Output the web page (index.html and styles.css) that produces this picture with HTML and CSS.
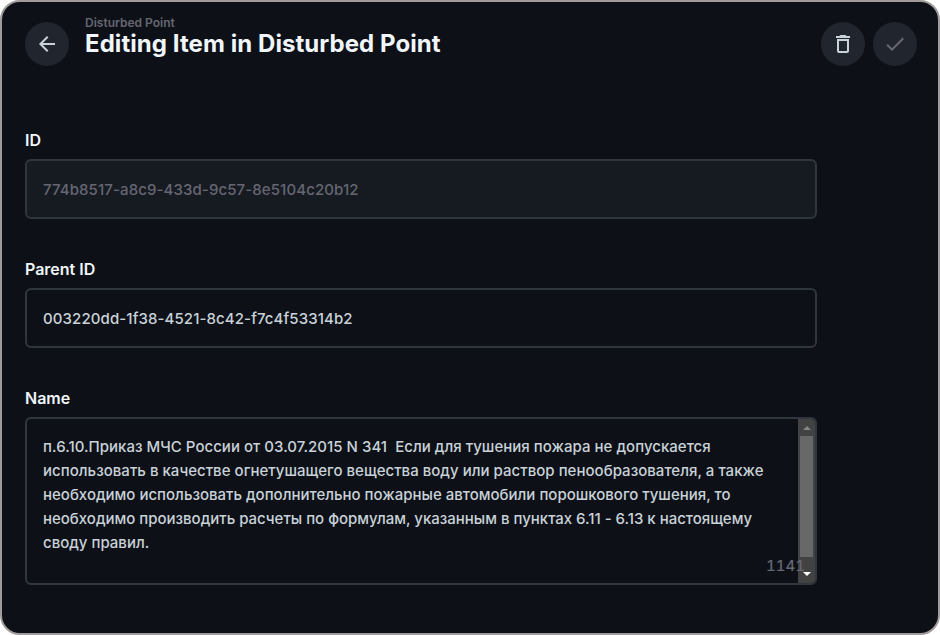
FILE: index.html
```html
<!DOCTYPE html>
<html lang="en">
<head>
<meta charset="utf-8">
<title>Editing Item in Disturbed Point</title>
<link rel="stylesheet" href="styles.css">
</head>
<body>
<main class="window">
  <header class="header">
    <button class="round" aria-label="Back"><svg viewBox="0 0 24 24"><path d="M20 11H7.83l5.59-5.59L12 4l-8 8 8 8 1.41-1.41L7.83 13H20v-2z"/></svg></button>
    <div class="titles">
      <div class="crumb">Disturbed Point</div>
      <h1>Editing Item in Disturbed Point</h1>
    </div>
    <button class="round" aria-label="Delete"><svg viewBox="0 0 24 24"><path d="M16 9v10H8V9h8m-1.500-6h-5l-1 1H5v2h14V4h-3.500l-1-1zM18 7H6v12c0 1.100.9 2 2 2h8c1.100 0 2-.9 2-2V7z"/></svg></button>
    <button class="round disabled" aria-label="Save"><svg viewBox="0 0 24 24"><path d="M9 16.170L4.830 12l-1.420 1.410L9 19 21 7l-1.410-1.410L9 16.170z"/></svg></button>
  </header>
  <form class="form">
    <section class="field">
      <label>ID</label>
      <div class="input readonly">774b8517-a8c9-433d-9c57-8e5104c20b12</div>
    </section>
    <section class="field">
      <label>Parent ID</label>
      <div class="input">003220dd-1f38-4521-8c42-f7c4f53314b2</div>
    </section>
    <section class="field">
      <label>Name</label>
      <div class="area">
        <p class="text"><span class="wide">п.6.10.Приказ МЧС России от 03.07.2015 N 341&nbsp; Если для тушения пожара не допускается</span><br><span class="wide">использовать в качестве огнетушащего вещества воду или раствор пенообразователя, а также</span><br>необходимо использовать дополнительно пожарные автомобили порошкового тушения, то<br><span class="tight">необходимо производить расчеты по формулам, указанным в пунктах 6.11 - 6.13 к настоящему</span><br>своду правил.</p>
        <div class="scrollbar">
          <svg class="arrow up" viewBox="0 0 8 4"><path d="M0 4L4 0l4 4z"/></svg>
          <div class="thumb"></div>
          <svg class="arrow down" viewBox="0 0 8 4"><path d="M0 0l4 4 4-4z"/></svg>
        </div>
        <span class="count">1141</span>
      </div>
    </section>
  </form>
</main>
</body>
</html>
```
FILE: styles.css
```css
* { box-sizing: border-box; }
body { margin: 0; background: #fff; font-family: Inter, sans-serif; color: #f0f6fc; }
.window { height: 635px; border: 2px solid #a19b9b; border-radius: 20px; background: #0d1117; padding: 13px 21px 0 23px; overflow: hidden; }
.header { display: flex; align-items: flex-start; height: 116px; }
.round { display: flex; align-items: center; justify-content: center; width: 44px; height: 44px; margin-top: 7px; padding: 0; border: 0; border-radius: 50%; background: #21262e; color: #c9d1d9; }
.round + .round { margin-left: 8px; }
.round svg { width: 24px; height: 24px; fill: currentColor; }
.round.disabled { color: #666672; }
.titles { flex: 1; margin-left: 16px; }
.crumb { font-size: 12px; line-height: 16px; font-weight: 600; color: #666672; }
h1 { margin: -3px 0 0; font-size: 24px; line-height: 32px; font-weight: 700; letter-spacing: 0.065px; white-space: nowrap; }
.form { width: 792px; }
.field { margin-bottom: 41px; }
.field label { display: block; font-size: 16px; line-height: 19px; margin-bottom: 9px; font-weight: 600; }
.input { height: 60px; padding: 0 16px; border: 2px solid #30363d; border-radius: 6px; display: flex; align-items: center; font-size: 15px; font-weight: 500; letter-spacing: 0.1px; color: #c9d1d9; }
.input.readonly { background: #161b22; color: #666672; }
.area { position: relative; display: flex; justify-content: space-between; height: 168px; border: 2px solid #30363d; border-radius: 6px; overflow: hidden; }
.text { flex: 1; margin: 16px 0 0 16px; font-size: 15px; line-height: 24px; font-weight: 500; color: #c9d1d9; white-space: nowrap; }
.wide { letter-spacing: 0.025px; }
.tight { letter-spacing: -0.012px; }
.scrollbar { width: 17px; background: #424242; display: flex; flex-direction: column; align-items: center; }
.thumb { width: 13px; height: 121px; background: #686868; }
.arrow { width: 8px; height: 4px; fill: #fff; }
.arrow.up { fill: #868686; margin: 7px 0 6px; }
.arrow.down { margin-top: 15px; }
.count { position: absolute; right: 10px; bottom: 5px; font-size: 15px; line-height: 24px; font-weight: 500; font-variant-numeric: tabular-nums; color: #666672; }
```
